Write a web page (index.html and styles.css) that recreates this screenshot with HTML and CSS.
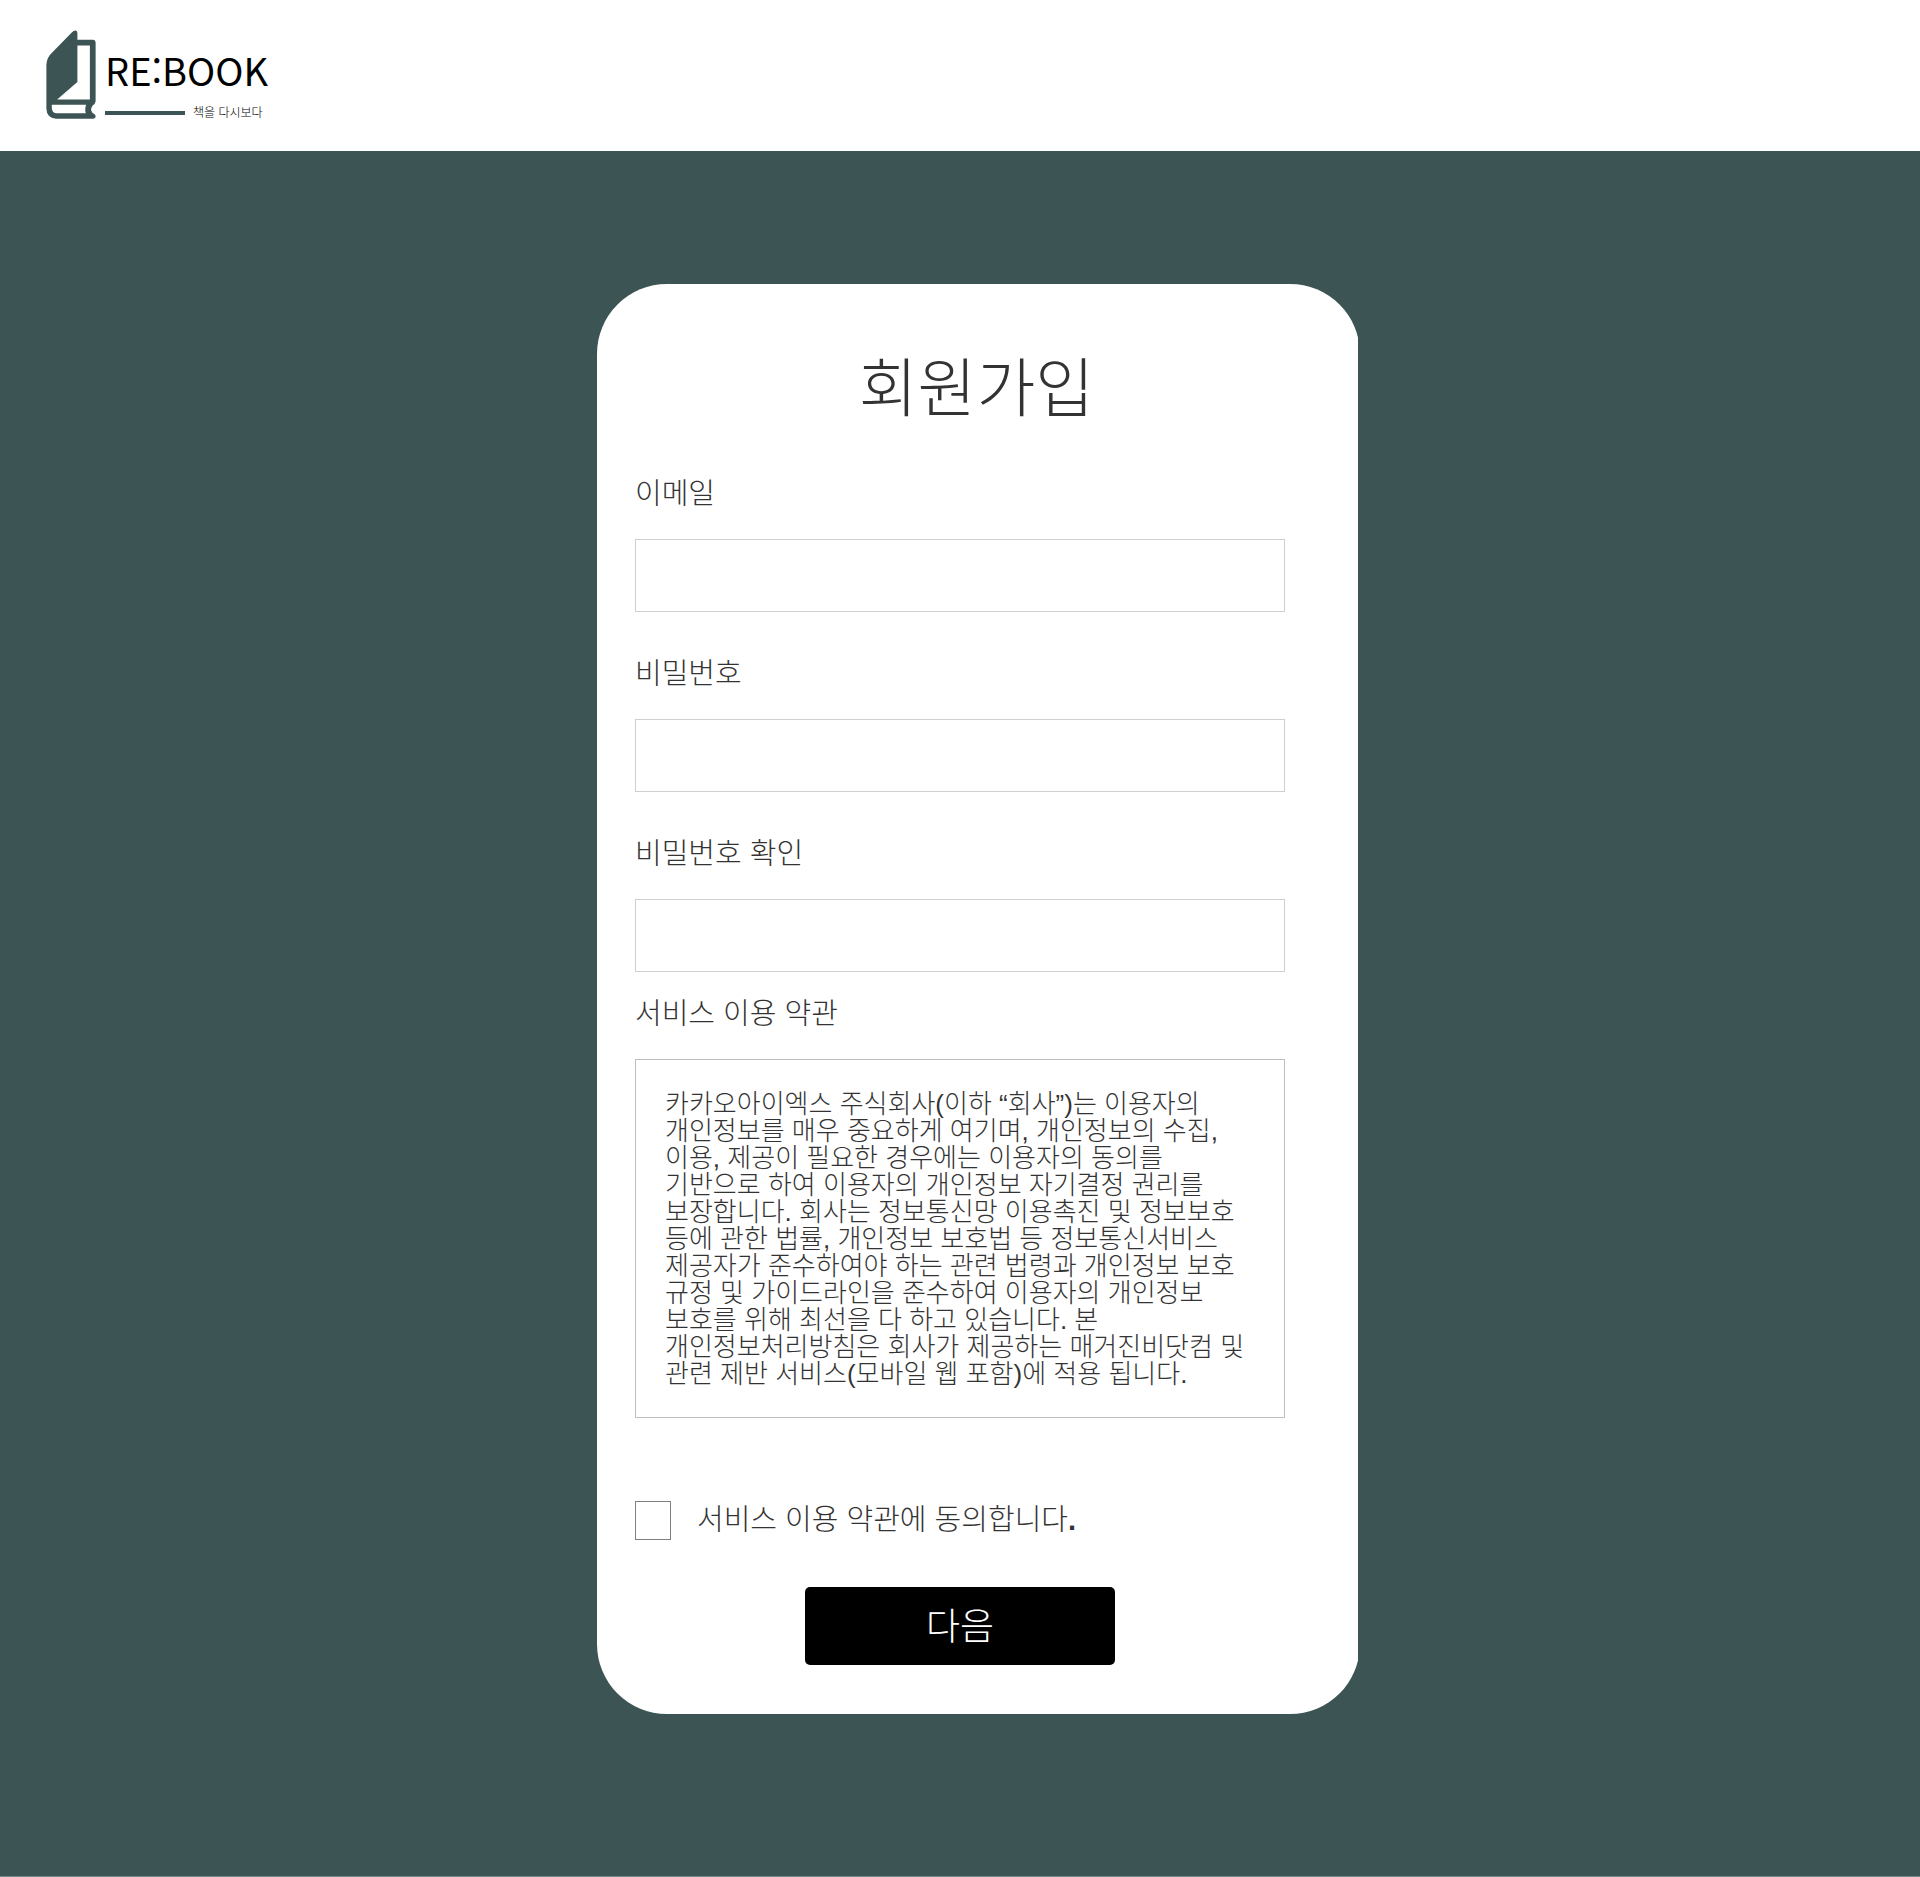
FILE: index.html
```html
<!DOCTYPE html>
<html lang="ko">
<head>
<meta charset="utf-8">
<meta name="viewport" content="width=device-width, initial-scale=1">
<title>회원가입 - RE:BOOK</title>
<link rel="stylesheet" href="styles.css">
</head>
<body>
<header class="site-header">
  <a class="logo" href="#">
    <svg class="logo-book" viewBox="47 31 148 264" aria-hidden="true">
      <path class="book-fill" fill-rule="evenodd" d="M48 134 Q49 112 66 97 L124 38 Q131 30 138 34 Q140 36 140 42 V60 H187 Q194 61 194 68 V243 Q193 250 186 254 Q179 262 181 270 Q183 277 190 280 Q194 282 194 287 Q194 294 186 294 H76 Q49 292 48 264 Z M140 77 V185 L80 237 H177 V77 Z M64 253 V262 Q65 277 79 278 H165 Q161 265 166 253 Z"/>
    </svg>
    <span class="logo-words">
      <span class="logo-name">RE:BOOK</span>
      <span class="logo-sub"><span class="logo-line"></span><span class="logo-tag">책을 다시보다</span></span>
    </span>
  </a>
</header>
<main class="page">
  <form class="card">
    <h1 class="title">회원가입</h1>
    <div class="fields">
      <div class="field">
        <label class="label" for="email">이메일</label>
        <input class="input" id="email" type="email">
      </div>
      <div class="field">
        <label class="label" for="password">비밀번호</label>
        <input class="input" id="password" type="password">
      </div>
      <div class="field">
        <label class="label" for="confirm">비밀번호 확인</label>
        <input class="input" id="confirm" type="password">
      </div>
    </div>
    <section class="field terms" aria-labelledby="terms-title">
      <h2 class="label" id="terms-title">서비스 이용 약관</h2>
      <p class="terms-text">카카오아이엑스 주식회사(이하 “회사”)는 이용자의 개인정보를 매우 중요하게 여기며, 개인정보의 수집, 이용, 제공이 필요한 경우에는 이용자의 동의를 기반으로 하여 이용자의 개인정보 자기결정 권리를 보장합니다. 회사는 정보통신망 이용촉진 및 정보보호 등에 관한 법률, 개인정보 보호법 등 정보통신서비스 제공자가 준수하여야 하는 관련 법령과 개인정보 보호 규정 및 가이드라인을 준수하여 이용자의 개인정보 보호를 위해 최선을 다 하고 있습니다. 본 개인정보처리방침은 회사가 제공하는 매거진비닷컴 및 관련 제반 서비스(모바일 웹 포함)에 적용 됩니다.</p>
    </section>
    <div class="agree">
      <input class="checkbox" id="agree" type="checkbox">
      <label class="label" for="agree">서비스 이용 약관에 동의합니다<b>.</b></label>
    </div>
    <button class="next" type="submit">다음</button>
  </form>
</main>
</body>
</html>
```

FILE: styles.css
```css
:root {
  --green: #3c5554;
  --ink: #333;
}

* {
  box-sizing: border-box;
}

body {
  margin: 0;
  background: #fff;
  color: var(--ink);
  font-family: "Liberation Sans", "Noto Sans CJK KR", sans-serif;
  font-weight: 300;
}

.site-header {
  display: flex;
  padding: 30px 46px 32px;
}

.logo {
  display: flex;
  gap: 9px;
  color: #000;
  text-decoration: none;
}

.logo-book {
  width: 50px;
  height: 89px;
}

.book-fill {
  fill: var(--green);
}

.logo-words {
  display: flex;
  flex-direction: column;
  justify-content: flex-end;
  gap: 10px;
}

.logo-name {
  font-family: "Noto Sans CJK KR", sans-serif;
  font-size: 38px;
  line-height: 54px;
  font-weight: 400;
}

.logo-sub {
  display: flex;
  align-items: center;
  gap: 8px;
}

.logo-line {
  width: 80px;
  height: 4px;
  background: var(--green);
}

.logo-tag {
  font-size: 12px;
  line-height: 12px;
}

.page {
  display: flex;
  justify-content: center;
  padding: 133px 0 162px 37px;
  background: var(--green);
  border-bottom: 1px solid #748a89;
}

.card {
  display: flex;
  flex-direction: column;
  width: 763px;
  padding: 70px 75px 49px 38px;
  border-radius: 70px;
  background: #fff;
  clip-path: inset(0 2px 0 0);
}

.title {
  margin: 0 -33px 49px 0;
  font-size: 64px;
  line-height: 70px;
  font-weight: 300;
  text-align: center;
}

.fields {
  display: flex;
  flex-direction: column;
  gap: 41px;
}

.field {
  display: flex;
  flex-direction: column;
  gap: 24px;
}

.label {
  margin: 0;
  font-size: 29px;
  line-height: 42px;
  font-weight: 300;
}

.label b {
  font-weight: 700;
}

.input {
  width: 100%;
  height: 73px;
  padding: 0 20px;
  border: 1px solid #cfcfcf;
  background: #fff;
  color: inherit;
  font: inherit;
  font-size: 26px;
}

.terms {
  margin-top: 21px;
}

.terms-text {
  margin: 0;
  padding: 31px 29px 29px;
  border: 1px solid #bfbfbf;
  font-size: 26px;
  line-height: 27px;
  word-break: keep-all;
}

.agree {
  display: flex;
  align-items: center;
  gap: 26px;
  margin: 81px 0 46px;
}

.checkbox {
  appearance: none;
  width: 36px;
  height: 39px;
  margin: 0;
  border: 1px solid #7f7f7f;
  background: #fff;
}

.checkbox:checked {
  background: var(--green);
}

.next {
  align-self: center;
  width: 310px;
  height: 78px;
  padding: 0 0 4px;
  border: 0;
  border-radius: 5px;
  background: #000;
  color: #fff;
  font: inherit;
  font-size: 37px;
}
```
